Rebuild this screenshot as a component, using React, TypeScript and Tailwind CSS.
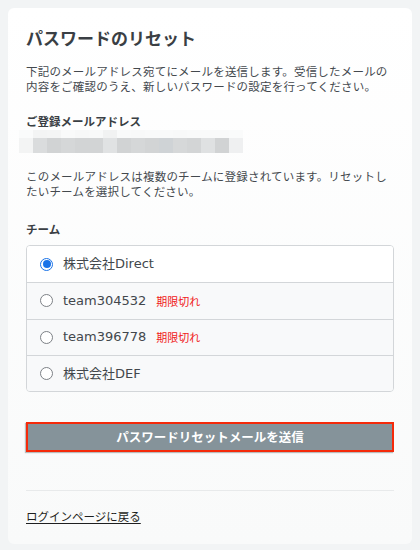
import { useState } from "react";

const TEAMS = [
  { name: "株式会社Direct", expired: false },
  { name: "team304532", expired: true },
  { name: "team396778", expired: true },
  { name: "株式会社DEF", expired: false },
];

// pixelated (blurred) email address
const BLUR_TOP = ["#fafbfb", "#f3f4f4", "#f4f5f5", "#f9fafa", "#f7f8f8", "#f8f9f9", "#f1f2f2", "#f9fafa", "#f8f9f9", "#f9fafa", "#f9fafa", "#f8f9f9", "#f9fafa", "#f9fafa", "#f9fafa", "#fafbfb"];
const BLUR_BOT = ["#f3f4f4", "#dadcdd", "#d1d3d4", "#d5d7d8", "#d2d4d5", "#d2d4d5", "#e0e2e3", "#d1d3d4", "#d5d7d8", "#d2d4d5", "#cfd3d6", "#d6d8d9", "#d3d5d6", "#dfe1e2", "#d1d3d4", "#eff0f1"];

export default function App() {
  const [team, setTeam] = useState(0);

  return (
    <div
      className="min-h-[550px] w-[420px] bg-[#f2f4f5] p-2"
      style={{ fontFamily: '"Noto Sans CJK JP", "Noto Sans", sans-serif' }}
    >
      <div className="rounded-md bg-gradient-to-b from-white to-[#f9fafa] px-[18px] pb-[18px] pt-[18px] text-[#44494e]">
        <h1 className="text-[17px] font-bold leading-[24px] text-[#3a3f44]">パスワードのリセット</h1>

        <p className="mt-[14px] text-[11.5px] leading-[15px] tracking-[0.2px]">
          下記のメールアドレス宛てにメールを送信します。受信したメールの内容をご確認のうえ、新しいパスワードの設定を行ってください。
        </p>

        <div className="mt-[19px] text-[11.5px] font-bold leading-[17px] text-[#3a3f44]">ご登録メールアドレス</div>
        <div className="-ml-[7px]">
          <div className="flex h-[8px]">
            {BLUR_TOP.map((c, i) => (
              <div key={i} className="h-full w-[14px]" style={{ background: c }} />
            ))}
          </div>
          <div className="flex h-[15px]">
            {BLUR_BOT.map((c, i) => (
              <div key={i} className="h-full w-[14px]" style={{ background: c }} />
            ))}
          </div>
        </div>

        <p className="mt-[16px] text-[11.5px] leading-[15px] tracking-[0.2px]">
          このメールアドレスは複数のチームに登録されています。リセットしたいチームを選択してください。
        </p>

        <div className="mt-[22px] text-[11.5px] font-bold leading-[17px] text-[#3a3f44]">チーム</div>

        <div className="mt-[7px] overflow-hidden rounded-[4px] border border-[#d3d6d9]">
          {TEAMS.map((t, i) => (
            <label
              key={t.name}
              className={`flex h-[36.25px] cursor-pointer items-center gap-[10px] px-[13px] ${
                i > 0 ? "border-t border-[#d3d6d9]" : ""
              } ${team === i ? "bg-white" : "bg-[#f8f9fa]"}`}
              onClick={() => setTeam(i)}
            >
              <span
                className={`flex h-[13px] w-[13px] items-center justify-center rounded-full border ${
                  team === i ? "border-[#1a73e8] bg-white" : "border-[#7d8186] bg-white"
                }`}
              >
                {team === i && <span className="h-[8px] w-[8px] rounded-full bg-[#1a73e8]" />}
              </span>
              <span
                className="text-[13px] text-[#42474c]"
                style={{ fontFamily: '"DejaVu Sans", "Noto Sans CJK JP", sans-serif' }}
              >
                {t.name}
              </span>
              {t.expired && <span className="text-[11px] text-[#f0201a]">期限切れ</span>}
            </label>
          ))}
        </div>

        <button className="mt-[30px] flex h-[30px] w-full items-center justify-center border-2 border-[#f52a0a] bg-[#85939a] text-[12.5px] font-bold text-white shadow-[-1px_1px_1px_rgba(0,0,0,0.25)]">
          パスワードリセットメールを送信
        </button>

        <div className="mt-[38px] h-px bg-[#e8eaeb]" />

        <a href="#" className="mt-[17px] inline-block text-[11.5px] leading-[17px] text-[#1e1f20] underline underline-offset-2">
          ログインページに戻る
        </a>
      </div>
    </div>
  );
}
